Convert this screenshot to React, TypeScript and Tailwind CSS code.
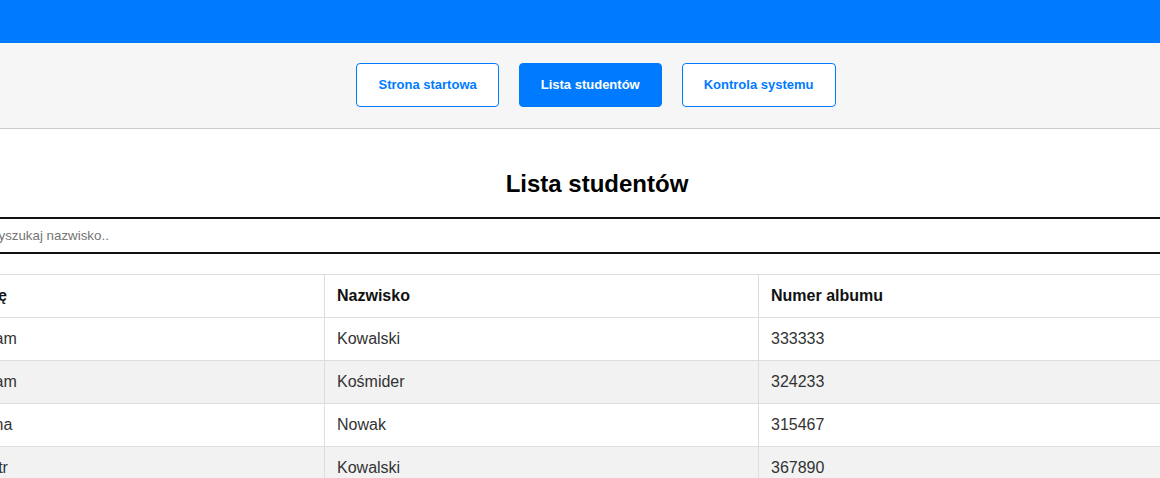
import React from "react";

const students = [
  { first: "Adam", last: "Kowalski", album: "333333" },
  { first: "Adam", last: "Kośmider", album: "324233" },
  { first: "Anna", last: "Nowak", album: "315467" },
  { first: "Piotr", last: "Kowalski", album: "367890" },
];

export default function App() {
  return (
    <div className="w-[1160px] h-[478px] overflow-hidden bg-white font-['Liberation_Sans',Arial,sans-serif]">
      <div className="w-[1192px]">
        <div className="h-[43px] bg-[#007bff]" />
        <nav className="h-[86px] bg-[#f6f6f6] border-b border-[#cccccc] flex justify-center gap-5 pt-5">
          <button className="h-[44px] px-[21px] rounded border border-[#007bff] bg-white text-[#007bff] text-[13px] font-bold">
            Strona startowa
          </button>
          <button className="h-[44px] px-[21px] rounded border border-[#007bff] bg-[#007bff] text-white text-[13px] font-bold">
            Lista studentów
          </button>
          <button className="h-[44px] px-[21px] rounded border border-[#007bff] bg-white text-[#007bff] text-[13px] font-bold">
            Kontrola systemu
          </button>
        </nav>
        <h2 className="mt-[41px] pl-[2px] text-center text-[24px] leading-[28px] font-bold text-black">
          Lista studentów
        </h2>
        <div className="mx-[-38px]">
          <div className="mx-[12px] mt-[19px] h-[37px] border-2 border-[#111111] flex items-center px-[10px]">
            <input
              className="w-full outline-none text-[13.333px] text-[#333] placeholder:text-[#757575] bg-transparent"
              placeholder="Wyszukaj nazwisko.."
            />
          </div>
          <table className="mt-5 w-full table-fixed border-collapse text-[16px]">
            <colgroup>
              <col className="w-[362px]" />
              <col className="w-[434px]" />
              <col />
            </colgroup>
            <thead>
              <tr className="h-[43px]">
                <th className="border border-[#dddddd] px-3 text-left font-bold text-[#111]">Imię</th>
                <th className="border border-[#dddddd] px-3 text-left font-bold text-[#111]">Nazwisko</th>
                <th className="border border-[#dddddd] px-3 text-left font-bold text-[#111]">Numer albumu</th>
              </tr>
            </thead>
            <tbody>
              {students.map((s, i) => (
                <tr key={i} className={`h-[43px] ${i % 2 === 1 ? "bg-[#f2f2f2]" : "bg-white"}`}>
                  <td className="border border-[#dddddd] px-3 text-[#333]">{s.first}</td>
                  <td className="border border-[#dddddd] px-3 text-[#333]">{s.last}</td>
                  <td className="border border-[#dddddd] px-3 text-[#333]">{s.album}</td>
                </tr>
              ))}
            </tbody>
          </table>
        </div>
      </div>
    </div>
  );
}
